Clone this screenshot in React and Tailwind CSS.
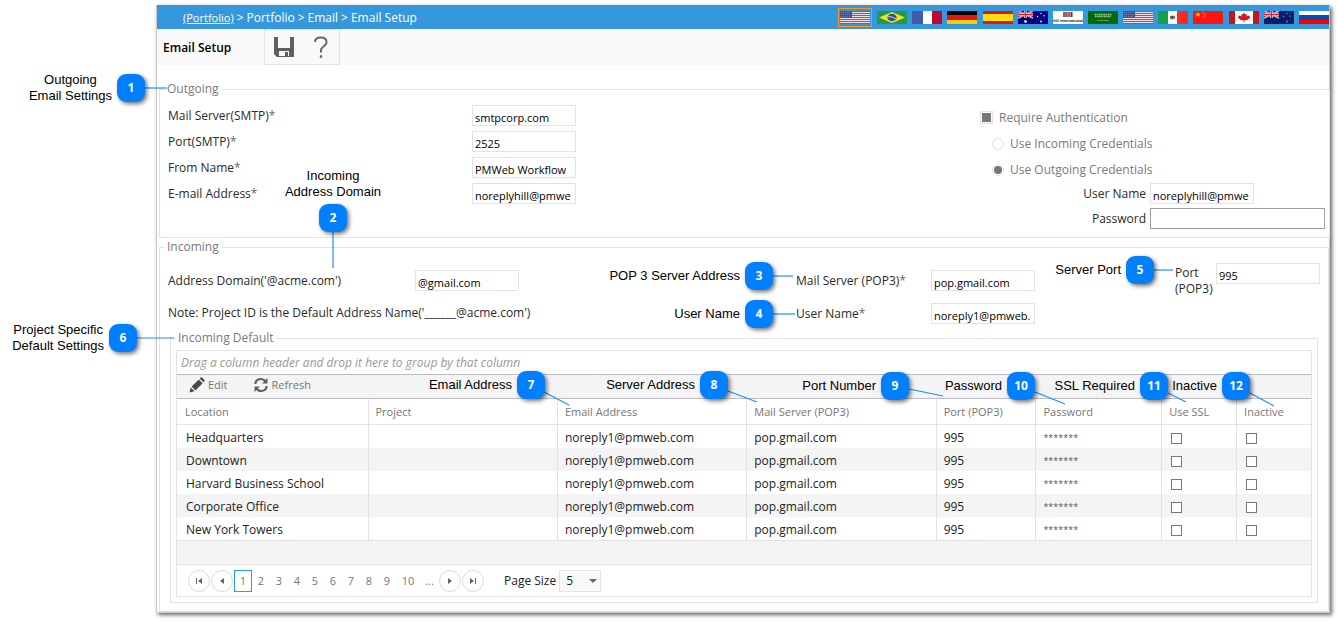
import clsx from 'clsx';

const FLAGS = ['us', 'br', 'fr', 'de', 'es', 'au', 'hill', 'sa', 'us', 'mx', 'cn', 'ca', 'nz', 'ru'];

const FLAG_NAMES = {
  us: 'United States',
  br: 'Brazil',
  fr: 'France',
  de: 'Germany',
  es: 'Spain',
  au: 'Australia',
  hill: 'Hill International',
  sa: 'Saudi Arabia',
  mx: 'Mexico',
  cn: 'China',
  ca: 'Canada',
  nz: 'New Zealand',
  ru: 'Russia',
};

const LOCATIONS = [
  'Headquarters',
  'Downtown',
  'Harvard Business School',
  'Corporate Office',
  'New York Towers',
];

// Numbered help badges laid over the form. `line` is the leader, relative to the badge.
const CALLOUTS = [
  { n: 1, pos: 'left-[20px] top-[72px]', text: ['Outgoing', 'Email Settings'], w: 'w-[125px]', line: [28, 14, 50, 14] },
  { n: 2, pos: 'left-[278px] top-[168px]', text: ['Incoming', 'Address Domain'], w: 'w-[110px]', stacked: true, line: [14, 28, 14, 64] },
  { n: 3, pos: 'left-[594px] top-[262px]', text: ['POP 3 Server Address'], w: 'w-[179px]', line: [28, 14, 48, 14] },
  { n: 4, pos: 'left-[594px] top-[300px]', text: ['User Name'], w: 'w-[179px]', line: [28, 14, 50, 14] },
  { n: 5, pos: 'left-[1034px] top-[256px]', text: ['Server Port'], w: 'w-[120px]', line: [28, 14, 47, 14] },
  { n: 6, pos: 'left-[0px] top-[322px]', text: ['Project Specific', 'Default Settings'], w: 'w-[137px]', line: [28, 14, 65, 14] },
  { n: 7, pos: 'left-[395px] top-[371px]', text: ['Email Address'], w: 'w-[150px]', line: [27, 21, 52, 34] },
  { n: 8, pos: 'left-[578px] top-[371px]', text: ['Server Address'], w: 'w-[150px]', line: [28, 20, 57, 31] },
  { n: 9, pos: 'left-[759px] top-[372px]', text: ['Port Number'], w: 'w-[150px]', line: [28, 17, 62, 24] },
  { n: 10, pos: 'left-[885px] top-[372px]', text: ['Password'], w: 'w-[150px]', line: [28, 20, 58, 32] },
  { n: 11, pos: 'left-[1018px] top-[372px]', text: ['SSL Required'], w: 'w-[150px]', line: [28, 21, 46, 30] },
  { n: 12, pos: 'left-[1130px] top-[372px]', text: ['Inactive'], w: 'w-[120px]', line: [28, 21, 52, 34] },
];

function UnionJack() {
  return (
    <g>
      <path d="M0 0L15 7M15 0L0 7" stroke="#fff" strokeWidth="1.8" />
      <path d="M0 0L15 7M15 0L0 7" stroke="#d8203a" strokeWidth="0.7" />
      <path d="M7.5 0V7M0 3.5H15" stroke="#fff" strokeWidth="2.6" />
      <path d="M7.5 0V7M0 3.5H15" stroke="#d8203a" strokeWidth="1.4" />
    </g>
  );
}

function FlagArt({ code }) {
  switch (code) {
    case 'us':
      return (
        <>
          <rect width="30" height="13" fill="#f1dfe4" />
          {[0, 2, 4, 6, 8, 10, 12].map(y => (
            <rect key={y} y={y} width="30" height="1" fill="#c4405c" />
          ))}
          <rect width="12" height="7" fill="#44548c" />
          <path d="M1 1.5H11M1 3.5H11M1 5.5H11" stroke="#8d98bd" strokeWidth="0.7" strokeDasharray="1 1" />
        </>
      );
    case 'br':
      return (
        <>
          <rect width="30" height="13" fill="#229a46" />
          <path d="M15 1L28 6.5L15 12L2 6.5Z" fill="#f6e017" />
          <ellipse cx="15" cy="6.5" rx="4.6" ry="3.7" fill="#2b4f8f" />
          <path d="M10.6 5.7Q15 5 19.2 8" stroke="#dfe8ee" strokeWidth="0.9" fill="none" />
        </>
      );
    case 'fr':
      return (
        <>
          <rect width="30" height="13" fill="#fff" />
          <rect width="11" height="13" fill="#3f5ba9" />
          <rect x="20" width="10" height="13" fill="#bf0a30" />
        </>
      );
    case 'de':
      return (
        <>
          <rect width="30" height="13" fill="#e01818" />
          <rect width="30" height="4" fill="#000" />
          <rect y="9" width="30" height="4" fill="#ffcc00" />
        </>
      );
    case 'es':
      return (
        <>
          <rect width="30" height="13" fill="#ffdd12" />
          <rect width="30" height="3" fill="#da1a1a" />
          <rect y="10" width="30" height="3" fill="#da1a1a" />
        </>
      );
    case 'au':
      return (
        <>
          <rect width="30" height="13" fill="#00007c" />
          <UnionJack />
          <g fill="#fff">
            <circle cx="7.5" cy="10.5" r="1.3" />
            <circle cx="23" cy="2.5" r="0.7" />
            <circle cx="19.5" cy="5.5" r="0.7" />
            <circle cx="26" cy="4.8" r="0.7" />
            <circle cx="23" cy="10.5" r="0.9" />
          </g>
        </>
      );
    case 'hill':
      return (
        <>
          <rect width="30" height="13" fill="#fff" />
          <rect x="10" y="1" width="10" height="5" fill="#b98b8b" />
          <path d="M11 1V6M13 1V6M16 1V6M18.5 1V6" stroke="#8c2a2e" strokeWidth="1" />
          <text
            x="15"
            y="11"
            textAnchor="middle"
            fontSize="3.5"
            fontWeight="700"
            textRendering="geometricPrecision"
            fill="#222"
          >
            Hill International
          </text>
        </>
      );
    case 'sa':
      return (
        <>
          <rect width="30" height="13" fill="#006c00" />
          <path d="M6.5 3.5H23.5M7 5.5H23" stroke="#9cc79c" strokeWidth="1.4" strokeDasharray="1.6 0.6" />
          <path d="M9 9.5H21" stroke="#6aa96a" strokeWidth="0.8" />
        </>
      );
    case 'mx':
      return (
        <>
          <rect width="30" height="13" fill="#fff" />
          <rect width="10" height="13" fill="#13a04c" />
          <rect x="19" width="11" height="13" fill="#ff2a1c" />
          <ellipse cx="14.5" cy="6.5" rx="2.8" ry="1.9" fill="#7d7561" />
          <circle cx="14.2" cy="6" r="1" fill="#453c2c" />
        </>
      );
    case 'cn':
      return (
        <>
          <rect width="30" height="13" fill="#ff1414" />
          <path d="M5 1L5.8 2.8H7.6L6.2 3.9L6.8 5.7L5 4.6L3.2 5.7L3.8 3.9L2.4 2.8H4.2Z" fill="#ffe000" />
          <g fill="#ffb400">
            <circle cx="10" cy="1.5" r="0.7" />
            <circle cx="12" cy="3" r="0.7" />
            <circle cx="12" cy="5" r="0.7" />
            <circle cx="10" cy="6.3" r="0.7" />
          </g>
        </>
      );
    case 'ca':
      return (
        <>
          <rect width="30" height="13" fill="#fff" />
          <rect width="6" height="13" fill="#c8141c" />
          <rect x="24" width="6" height="13" fill="#c8141c" />
          <path
            d="M15 1.5L16.2 3.6L17.8 3L17.4 5.4L19.5 4.5L21.5 6.2L18 9.2H15.4V11.5H14.6V9.2H12L8.5 6.2L10.5 4.5L12.6 5.4L12.2 3L13.8 3.6Z"
            fill="#d8141c"
          />
        </>
      );
    case 'nz':
      return (
        <>
          <rect width="30" height="13" fill="#00206c" />
          <UnionJack />
          <g fill="#c8647c">
            <circle cx="23" cy="2.5" r="0.8" />
            <circle cx="19.5" cy="5.5" r="0.8" />
            <circle cx="26" cy="5" r="0.8" />
            <circle cx="23" cy="10.5" r="0.9" />
          </g>
        </>
      );
    default:
      return (
        <>
          <rect width="30" height="13" fill="#fff" />
          <rect y="4" width="30" height="5" fill="#0c4ca8" />
          <rect y="9" width="30" height="4" fill="#ff0000" />
        </>
      );
  }
}

function Flag({ code, selected }) {
  return (
    <button
      type="button"
      aria-label={FLAG_NAMES[code]}
      className={clsx('block shrink-0', selected && 'border border-[#ff9020] px-px py-[2px]')}
    >
      <svg width="30" height="13" viewBox="0 0 30 13" className="block">
        <FlagArt code={code} />
      </svg>
    </button>
  );
}

function Label({ htmlFor, required, children }) {
  return (
    <label htmlFor={htmlFor} className="block leading-4 text-[#2a2a2a]">
      {children}
      {required && <span className="text-[#666]">*</span>}
    </label>
  );
}

function TextBox({ id, value, wide, type = 'text' }) {
  return (
    <input
      id={id}
      type={type}
      defaultValue={value}
      className={clsx(
        'h-[21px] border bg-white pl-[2px] pt-[3px] text-[11px] leading-4 text-black outline-none',
        wide ? 'w-[175px] border-[#a0a0a0]' : 'w-[104px] border-[#e2e2e2]'
      )}
    />
  );
}

function FormRow({ id, label, value }) {
  return (
    <>
      <Label htmlFor={id} required>{label}</Label>
      <TextBox id={id} value={value} />
    </>
  );
}

function Outgoing() {
  return (
    <fieldset className="-mr-px ml-[2px] mt-[15px] border border-[#e2e2e2] pb-[8px] pl-[8px] pr-[4px]">
      <legend className="-ml-1 px-[3px] text-[#7a7a7a]">Outgoing</legend>
      <div className="flex justify-between pt-[7px]">
        <div className="grid grid-cols-[304px_auto] content-start items-center gap-y-[5px]">
          <FormRow id="smtp" label="Mail Server(SMTP)" value="smtpcorp.com" />
          <FormRow id="smtp-port" label="Port(SMTP)" value="2525" />
          <FormRow id="from" label="From Name" value="PMWeb Workflow" />
          <FormRow id="email" label="E-mail Address" value="noreplyhill@pmwe" />
        </div>

        <div className="w-[345px] text-[#7a7a7a]">
          <label className="flex h-[26px] items-center pb-px">
            <input
              type="checkbox"
              defaultChecked
              className="mr-[6px] size-[13px] appearance-none border border-[#e2e2e2] bg-white bg-clip-content p-px checked:bg-[#777]"
            />
            Require Authentication
          </label>
          <label className="flex h-[26px] items-center pb-px pl-3">
            <input
              type="radio"
              name="credentials"
              className="mr-[6px] size-3 appearance-none rounded-full border border-[#e2e2e2] bg-clip-content p-px checked:bg-[#777]"
            />
            Use Incoming Credentials
          </label>
          <label className="flex h-[26px] items-center pb-px pl-3">
            <input
              type="radio"
              name="credentials"
              defaultChecked
              className="mr-[6px] size-3 appearance-none rounded-full border border-[#e2e2e2] bg-clip-content p-px checked:bg-[#777]"
            />
            Use Outgoing Credentials
          </label>
          <div className="grid grid-cols-[166px_auto] items-center justify-start gap-x-1 gap-y-1 text-right">
            <Label htmlFor="out-user">User Name</Label>
            <TextBox id="out-user" value="noreplyhill@pmwe" />
            <Label htmlFor="out-pass">Password</Label>
            <TextBox id="out-pass" type="password" wide />
          </div>
        </div>
      </div>
    </fieldset>
  );
}

function EditIcon() {
  return (
    <svg width="16" height="16" viewBox="0 0 16 16" fill="#4a4a4a">
      <path d="M0.500 15.500L1.800 10.500L5.500 14.200Z" />
      <path d="M2.600 9.600L9.800 2.400L13.600 6.200L6.400 13.400Z" />
      <path d="M10.700 1.500L11.700 0.600Q12.400 0 13.100 0.600L15.300 2.800Q16 3.500 15.400 4.300L14.500 5.300Z" />
    </svg>
  );
}

function RefreshIcon() {
  return (
    <svg width="14" height="16" viewBox="0 0 14 16" fill="none" stroke="#5f5f5f" strokeWidth="2.2">
      <path d="M1.300 7Q1.800 2 7 2Q9.500 2 11.500 4.300" />
      <path d="M12.700 9Q12.200 14 7 14Q4.500 14 2.500 11.700" />
      <path d="M13.500 1V6.500H8Z" fill="#5f5f5f" stroke="none" />
      <path d="M0.500 15V9.500H6Z" fill="#5f5f5f" stroke="none" />
    </svg>
  );
}

function PagerButton({ label, path }) {
  return (
    <button
      type="button"
      aria-label={label}
      className="mr-px flex size-[22px] items-center justify-center rounded-full border border-[#dcdcdc]"
    >
      <svg width="8" height="8" viewBox="0 0 8 8" fill="#666">
        <path d={path} />
      </svg>
    </button>
  );
}

function Pager() {
  return (
    <div className="flex h-8 items-center border-t border-[#e2e2e2] pl-[11px] text-[11px] text-[#777]">
      <PagerButton label="First page" path="M1 1H2V7H1ZM7 1V7L3 4Z" />
      <PagerButton label="Previous page" path="M6 1V7L2 4Z" />
      <button type="button" className="h-[22px] w-[18px] border border-[#25a0da]">1</button>
      {[2, 3, 4, 5, 6, 7, 8, 9].map(n => (
        <button key={n} type="button" className="w-[18px]">{n}</button>
      ))}
      <button type="button" className="w-6">10</button>
      <button type="button" className="w-[19px]">...</button>
      <PagerButton label="Next page" path="M2 1V7L6 4Z" />
      <PagerButton label="Last page" path="M1 1V7L5 4ZM6 1H7V7H6Z" />
      <label htmlFor="page-size" className="ml-[19px] mr-[3px] text-[12px] text-[#222]">Page Size</label>
      <div className="relative">
        <select
          id="page-size"
          defaultValue="5"
          className="block h-[22px] w-[42px] appearance-none border border-[#e2e2e2] bg-[#f9f9f9] pl-[6px] text-[12px] text-[#222]"
        >
          <option>5</option>
          <option>10</option>
          <option>20</option>
        </select>
        <svg width="8" height="4" viewBox="0 0 8 4" className="pointer-events-none absolute right-1 top-[9px]" fill="#666">
          <path d="M0 0H8L4 4Z" />
        </svg>
      </div>
    </div>
  );
}

function LocationGrid() {
  const th = 'border-b border-l border-[#e2e2e2] px-[7px] text-left font-normal first:border-l-0 first:pl-2';
  const td = 'border-l border-[#e2e2e2] px-[7px] pt-[3px] first:border-l-0 first:pl-[9px]';

  return (
    <div className="border border-[#e2e2e2]">
      <p className="h-[23px] pl-1 italic leading-6 text-[#999]">
        Drag a column header and drop it here to group by that column
      </p>
      <div className="flex h-[25px] items-center border-y border-[#bcbcc6] bg-[#f4f4f4] pb-[3px] pl-3 text-[11px] text-[#767676]">
        <button type="button" className="mr-[26px] flex items-center gap-[3px]">
          <EditIcon />
          Edit
        </button>
        <button type="button" className="flex items-center gap-1">
          <RefreshIcon />
          Refresh
        </button>
      </div>

      <table className="w-full table-fixed border-separate border-spacing-0 text-[#222]">
        <colgroup>
          <col className="w-[16.8%]" />
          <col className="w-[16.7%]" />
          <col className="w-[16.7%]" />
          <col className="w-[16.7%]" />
          <col className="w-[8.8%]" />
          <col className="w-[11.1%]" />
          <col className="w-[6.6%]" />
          <col className="w-[6.6%]" />
        </colgroup>
        <thead>
          <tr className="h-[26px] text-[11px] text-[#767676]">
            <th className={th}>Location</th>
            <th className={th}>Project</th>
            <th className={th}>Email Address</th>
            <th className={th}>Mail Server (POP3)</th>
            <th className={th}>Port (POP3)</th>
            <th className={th}>Password</th>
            <th className={th}>Use SSL</th>
            <th className={th}>Inactive</th>
          </tr>
        </thead>
        <tbody>
          {LOCATIONS.map(name => (
            <tr key={name} className="h-[23px] leading-4 even:bg-[#f4f4f4]">
              <td className={td}>{name}</td>
              <td className={td} />
              <td className={td}>noreply1@pmweb.com</td>
              <td className={td}>pop.gmail.com</td>
              <td className={td}>995</td>
              <td className={clsx(td, 'text-[9px] text-[#555]')}>*******</td>
              <td className={td}>
                <input type="checkbox" aria-label={`Use SSL for ${name}`} className="ml-0.5 block size-[11px] appearance-none border border-[#777] bg-white" />
              </td>
              <td className={td}>
                <input type="checkbox" aria-label={`${name} inactive`} className="ml-0.5 block size-[11px] appearance-none border border-[#777] bg-white" />
              </td>
            </tr>
          ))}
        </tbody>
      </table>

      <div className="h-6 border-t border-[#e2e2e2] bg-[#f4f4f4]" />
      <Pager />
    </div>
  );
}

function Incoming() {
  return (
    <fieldset className="ml-[2px] border border-[#e2e2e2] pb-[8px]">
      <legend className="ml-1 px-[3px] text-[#7a7a7a]">Incoming</legend>
      <div className="flex justify-between pl-[8px] pr-2 pt-[7px]">
        <div className="pt-[7px]">
          <div className="grid grid-cols-[247px_auto] items-center justify-start">
            <Label htmlFor="domain">Address Domain('@acme.com')</Label>
            <TextBox id="domain" value="@gmail.com" />
          </div>
          <p className="mt-[14px] leading-4 text-[#2a2a2a]">
            Note: Project ID is the Default Address Name('______@acme.com')
          </p>
        </div>
        <div className="flex">
          <div className="grid grid-cols-[135px_auto] content-start items-center gap-y-3 pt-[7px]">
            <FormRow id="pop" label="Mail Server (POP3)" value="pop.gmail.com" />
            <FormRow id="pop-user" label="User Name" value="noreply1@pmweb." />
          </div>
          <div className="ml-[140px] flex items-start">
            <div className="w-[41px] pt-[2px]">
              <Label htmlFor="pop-port">Port (POP3)</Label>
            </div>
            <TextBox id="pop-port" value="995" />
          </div>
        </div>
      </div>

      <fieldset className="mx-[10px] mt-[5px] border border-[#e2e2e2] px-[5px] pb-[5px]">
        <legend className="px-[2px] text-[#7a7a7a]">Incoming Default</legend>
        <div className="pt-[3px]">
          <LocationGrid />
        </div>
      </fieldset>
    </fieldset>
  );
}

function Callout({ n, pos, w, text, stacked, line }) {
  const [x1, y1, x2, y2] = line;
  return (
    <div
      className={clsx(
        'pointer-events-none absolute flex items-center leading-4 text-black',
        stacked ? 'flex-col gap-1' : 'justify-end gap-[5px]',
        pos,
        w
      )}
    >
      <div className='whitespace-nowrap text-center font-["Liberation_Sans",Arial,sans-serif] text-[13px]'>
        {text.map(t => <div key={t}>{t}</div>)}
      </div>
      <div className="relative size-7 shrink-0">
        <svg className="absolute left-0 top-0 overflow-visible" width="28" height="28">
          <line x1={x1} y1={y1} x2={x2} y2={y2} stroke="#1e8fff" strokeWidth="1.2" />
        </svg>
        <span className="relative flex size-7 items-center justify-center rounded-[9px] bg-[#0080ff] text-[12px] font-bold text-white shadow-[2px_2px_4px_rgba(0,0,0,0.55)]">
          {n}
        </span>
      </div>
    </div>
  );
}

export default function App() {
  return (
    <div className='relative bg-white pb-[9px] pl-[156px] pr-[8px] pt-[5px] font-["Open_Sans","Noto_Sans",sans-serif] text-[12px] leading-[18px]'>
      <main className="border-x border-b border-[#c8c8c8] bg-white shadow-[2px_2px_4px_rgba(0,0,0,0.6)]">
        <header className="flex h-6 items-center justify-between overflow-hidden bg-[#3598dc] pl-[26px] text-white">
          <nav className="flex gap-[3px] whitespace-nowrap pt-[2px] font-medium">
            <a href="#" className="text-[11px] underline">(Portfolio)</a>
            <span>&gt;</span>
            <span>Portfolio</span>
            <span>&gt;</span>
            <span>Email</span>
            <span>&gt;</span>
            <span>Email Setup</span>
          </nav>
          <div className="flex w-[491px] items-center justify-between">
            {FLAGS.map((code, i) => <Flag key={i} code={code} selected={i === 0} />)}
          </div>
        </header>

        <div className="flex h-9 items-center bg-[#f9f9f9] pl-[6px]">
          <h1 className="w-[101px] pt-px font-semibold text-black">Email Setup</h1>
          <div className="flex h-9 w-[76px] items-center border border-[#e2e2e2]">
            <button type="button" aria-label="Save" className="ml-[9px]">
              <svg width="20" height="20" viewBox="0 0 20 20" className="block" fill="#5f5f5f">
                <path fillRule="evenodd" d="M0 0H20V20H3L0 17ZM4 0V11H16V0ZM5 14V19H15V14Z" />
                <path d="M11 15H14V19H11Z" />
              </svg>
            </button>
            <button type="button" aria-label="Help" className="ml-5">
              <svg width="14" height="22" viewBox="0 0 14 22" className="block" fill="none" stroke="#6a6a6a" strokeWidth="2">
                <path d="M1 6Q1 1.500 6.800 1.500Q12.500 1.500 12.500 6Q12.500 8.500 9.500 10.500Q7 12.300 7 14V16.500" />
                <path d="M5.800 20.500H8.200" strokeWidth="2.6" />
              </svg>
            </button>
          </div>
        </div>

        <Outgoing />
        <Incoming />
      </main>

      {CALLOUTS.map(c => <Callout key={c.n} {...c} />)}
    </div>
  );
}
